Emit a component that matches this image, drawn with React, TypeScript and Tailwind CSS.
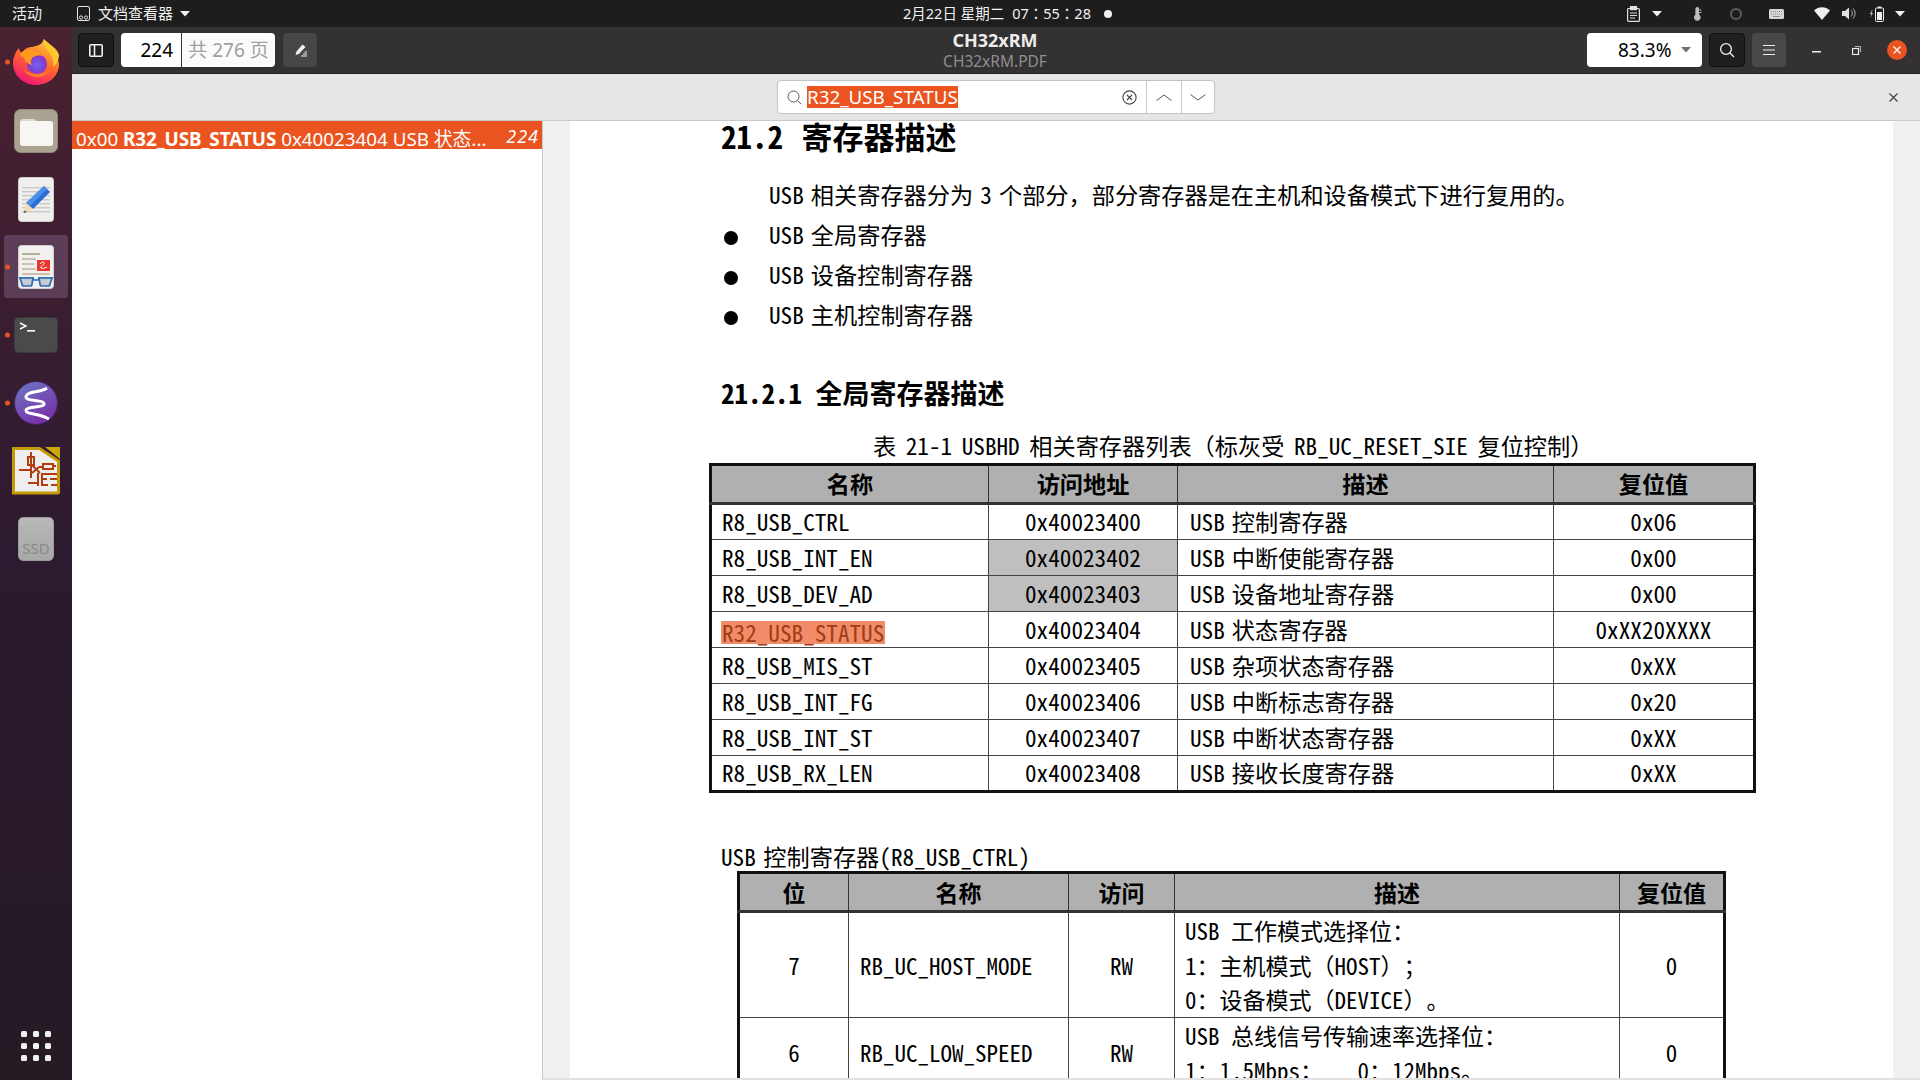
import React from "react";

const doc = "font-['Noto_Sans_Mono_CJK_SC','Noto_Sans_CJK_SC',monospace]";
const ui = "font-['Noto_Sans','Noto_Sans_CJK_SC',sans-serif]";

function Dot() {
  return <span className="absolute left-[5px] top-1/2 h-[5px] w-[5px] -translate-y-1/2 rounded-full bg-[#e95420]" />;
}

function Firefox() {
  return (
    <svg width="46" height="46" viewBox="0 0 46 46">
      <defs>
        <linearGradient id="ff1" x1="0.8" y1="0" x2="0.3" y2="1">
          <stop offset="0" stopColor="#ffd43a" />
          <stop offset="0.5" stopColor="#ff6a2a" />
          <stop offset="1" stopColor="#f0127a" />
        </linearGradient>
        <radialGradient id="ff2" cx="0.5" cy="0.55" r="0.55">
          <stop offset="0" stopColor="#6f63f0" />
          <stop offset="1" stopColor="#8a2fc0" />
        </radialGradient>
      </defs>
      <path d="M31 0c1 5 4 8 8 12 5 5 7 10 7 13 0 12-10 21-23 21C10 46 0 36 0 24 0 18 3 12 6 9c0 2 1 4 3 5 2-4 6-6 10-6 4-1 8-2 10-4z" fill="url(#ff1)" />
      <path d="M31 0c-1 5 1 9 5 13 4 5 5 10 4 15 4-3 6-8 6-12C45 10 36 5 31 0z" fill="#ffc92e" />
      <circle cx="24" cy="25" r="10" fill="url(#ff2)" />
      <path d="M7 15c3-4 9-6 13-3 4 1 8 2 10 5-4-1-7 0-10 1-2 3-3 5-1 8-5-1-8-5-8-8-2 0-3-1-4-3z" fill="#ff9a1f" />
      <path d="M10 30c3 6 10 9 17 8 5-1 9-4 11-9-3 5-9 6-14 6-5 0-10-2-14-5z" fill="#ff7a2a" />
    </svg>
  );
}

function Files() {
  return (
    <svg width="44" height="44" viewBox="0 0 44 44">
      <rect x="0.5" y="0.5" width="43" height="43" rx="6" fill="#aaa392" stroke="#8f897b" />
      <path d="M6 13a3 3 0 0 1 3-3h11l4 3v3H6z" fill="#dcd8ce" />
      <rect x="6" y="12" width="33" height="25" rx="2.5" fill="#f7f6f3" />
    </svg>
  );
}

function Editor() {
  return (
    <svg width="36" height="45" viewBox="0 0 36 45">
      <rect x="0.5" y="0.5" width="35" height="44" rx="3" fill="#f0efee" stroke="#cfcfcf" />
      {[10, 14, 18, 22, 26, 30, 34].map((y) => (
        <rect key={y} x="4" y={y} width="28" height="1.4" fill="#c9c9c9" />
      ))}
      <path d="M26 9l6 6-17 17-7-6z" fill="#2a6fd6" />
      <path d="M26 9l3 3-17 17-4-3z" fill="#4a90e8" />
      <path d="M8 26l7 6-9 4z" fill="#eed9b5" />
      <path d="M6.8 33.5l1.8 1.5-3 1z" fill="#333" />
    </svg>
  );
}

function Viewer() {
  return (
    <svg width="36" height="44" viewBox="0 0 36 44">
      <rect x="0.5" y="0.5" width="35" height="43" rx="3" fill="#f2f1ef" stroke="#cfcfcf" />
      <rect x="4" y="8" width="18" height="2" fill="#b7ae98" />
      <rect x="4" y="13" width="14" height="2" fill="#c9c2af" />
      <rect x="4" y="18" width="12" height="2" fill="#c9c2af" />
      <rect x="4" y="23" width="14" height="2" fill="#c9c2af" />
      <rect x="19" y="15" width="13" height="11" fill="#e8362f" />
      <path d="M22 19c2-3 5-2 4 0s-4 2-3 4c1 1 4 0 6-1" fill="none" stroke="#fff" strokeWidth="1" />
      <rect x="4" y="28" width="28" height="2" fill="#c9c2af" />
      <path d="M1 33h14l1 2h4l1-2h14" fill="none" stroke="#2f6cb5" strokeWidth="1.5" />
      <path d="M2 33h13l-1 6a2 2 0 0 1-2 2H6a2 2 0 0 1-2-2zM21 33h13l-2 6a2 2 0 0 1-2 2h-6a2 2 0 0 1-2-2z" fill="#b9c3cc" fillOpacity="0.8" stroke="#2f6cb5" strokeWidth="1.7" />
    </svg>
  );
}

function Terminal() {
  return (
    <svg width="44" height="36" viewBox="0 0 44 36">
      <rect x="0.5" y="0.5" width="43" height="35" rx="4" fill="#4a4a4a" stroke="#3a3a3a" />
      <path d="M6 6l6 3-6 3" fill="none" stroke="#fff" strokeWidth="1.4" />
      <rect x="13" y="13" width="8" height="1.6" fill="#fff" />
    </svg>
  );
}

function Emacs() {
  return (
    <svg width="44" height="44" viewBox="0 0 44 44">
      <defs>
        <linearGradient id="em" x1="0" y1="0" x2="0.6" y2="1">
          <stop offset="0" stopColor="#6a7cc4" />
          <stop offset="1" stopColor="#7a2fa8" />
        </linearGradient>
      </defs>
      <circle cx="22" cy="22" r="21.5" fill="url(#em)" stroke="#43245e" />
      <path d="M33 7C26 12 13 10 12 15.500C11 21 29 18 30 22.500C31 27 12 25 12 29.500C12 33.500 25 32 35 38" fill="none" stroke="#fff" strokeWidth="3" />
    </svg>
  );
}

function Kicad() {
  return (
    <svg width="48" height="48" viewBox="0 0 48 48">
      <path d="M1.5 1.5h26l19 12.500v31a1 1 0 0 1-1 1h-44z" fill="#eeeeee" stroke="#c59a08" strokeWidth="3" />
      <path d="M33 0h15v12z" fill="#cda60e" />
      <g stroke="#b23c10" strokeWidth="2" fill="none">
        <path d="M19 5v26M7 23h13M20 18l8 8M20 26l7-6" />
        <rect x="16" y="10" width="6" height="8" />
        <path d="M27 20h4M31 17h10v5H31zM41 19h3" />
        <path d="M16 36h10M26 26v13M31 27h14M31 32h4M38 32h7M31 38h5M39 38h6" />
        <path d="M30 26v13" />
      </g>
    </svg>
  );
}

function Ssd() {
  return (
    <div className="flex h-[44px] w-[36px] flex-col items-center justify-end rounded-[5px] border border-[#9a9a9a] bg-gradient-to-b from-[#b8b8b8] to-[#a8a8a8] pb-[3px]">
      <span className="font-['Noto_Sans',sans-serif] text-[15px] leading-[18px] text-[#8a8a8a]">SSD</span>
    </div>
  );
}

function Dock() {
  return (
    <aside className="flex w-[72px] shrink-0 flex-col items-center bg-gradient-to-b from-[#4a2130] via-[#2c1a30] to-[#251a24]">
      <div className="relative mt-[12px] flex h-[46px] w-[72px] items-center justify-center"><Dot /><Firefox /></div>
      <div className="mt-[24px] flex h-[44px] items-center justify-center"><Files /></div>
      <div className="mt-[24px] flex h-[45px] items-center justify-center"><Editor /></div>
      <div className="relative mt-[13px] flex h-[63px] w-[72px] items-center justify-center">
        <div className="flex h-[63px] w-[64px] items-center justify-center rounded-[3px] bg-[#5c3d58]"><Viewer /></div>
        <Dot />
      </div>
      <div className="relative mt-[19px] flex h-[36px] w-[72px] items-center justify-center"><Dot /><Terminal /></div>
      <div className="relative mt-[28px] flex h-[44px] w-[72px] items-center justify-center"><Dot /><Emacs /></div>
      <div className="mt-[22px] flex h-[48px] items-center justify-center"><Kicad /></div>
      <div className="mt-[22px] flex h-[44px] items-center justify-center"><Ssd /></div>
      <div className="mt-auto mb-[19px] grid grid-cols-3 gap-x-[6px] gap-y-[6px]">
        {Array.from({ length: 9 }).map((_, i) => (
          <span key={i} className="h-[6px] w-[6px] rounded-[1.5px] bg-[#f2f2f2]" />
        ))}
      </div>
    </aside>
  );
}

function Arrow({ className = "" }: { className?: string }) {
  return (
    <svg width="10" height="6" viewBox="0 0 10 6" className={className}>
      <path d="M0 0h10L5 5.5z" fill="currentColor" />
    </svg>
  );
}

function TopBar() {
  return (
    <header className={`flex h-[27px] shrink-0 items-center bg-[#1d1d1d] text-[15px] text-[#f0f0f0] ${ui}`}>
      <div className="flex flex-1 items-center">
        <span className="ml-[12px] w-[65px]">活动</span>
        <svg width="13" height="16" viewBox="0 0 13 16" fill="none" stroke="#e8e8e8" strokeWidth="1">
          <rect x="0.5" y="0.5" width="12" height="14" rx="1.5" />
          <circle cx="4" cy="11.5" r="1.6" /><circle cx="9" cy="11.5" r="1.6" />
        </svg>
        <span className="ml-[8px]">文档查看器</span>
        <Arrow className="ml-[7px]" />
      </div>
      <div className="absolute left-[903px] flex items-center">
        <span className="text-[14.500px]">2月22日 星期二</span>
        <span className="ml-[8px] font-['Noto_Sans','Noto_Sans_CJK_TC',sans-serif] text-[14.500px]">07：55：28</span>
        <span className="ml-[13px] h-[8px] w-[8px] rounded-full bg-[#f0f0f0]" />
      </div>
      <div className="flex items-center">
        <svg width="13" height="16" viewBox="0 0 13 16" fill="none" stroke="#e0e0e0" strokeWidth="1.2">
          <rect x="0.6" y="2.5" width="11.8" height="12.9" rx="1" />
          <rect x="3.5" y="0.6" width="6" height="3" fill="#e0e0e0" />
          <path d="M3 7h7M3 9.5h7M3 12h5" />
        </svg>
        <Arrow className="ml-[12px]" />
        <svg width="8" height="14" viewBox="0 0 8 14" className="ml-[32px]" fill="none" stroke="#bdbdbd" strokeWidth="1.3">
          <path d="M2 8V2a1.3 1.3 0 0 1 2.6 0v6a2.7 2.700 0 1 1-2.6 0z" fill="#bdbdbd" /><path d="M5.5 3h2M5.5 5.5h2" strokeWidth="1" />
        </svg>
        <span className="ml-[28px] h-[12px] w-[12px] rounded-full border-[2.500px] border-[#5a5a5a]" />
        <svg width="15" height="10" viewBox="0 0 15 10" className="ml-[27px]">
          <rect width="15" height="10" rx="1.5" fill="#d8d8d8" />
          <path d="M2 2.5h11M2 5h11" stroke="#8a8a8a" strokeWidth="1" strokeDasharray="1 1" /><rect x="4" y="7" width="7" height="1" fill="#8a8a8a" />
        </svg>
        <svg width="16" height="13" viewBox="0 0 16 13" className="ml-[30px]">
          <path d="M0 3.5C4-1 12-1 16 3.5L8 13z" fill="#f0f0f0" />
        </svg>
        <svg width="15" height="13" viewBox="0 0 15 13" className="ml-[12px]">
          <path d="M0 4h3l4-3.500v12L3 9H0z" fill="#e0e0e0" />
          <path d="M9 3.500a4 4 0 0 1 0 6M11 1.500a7 7 0 0 1 0 10" fill="none" stroke="#b8b8b8" strokeWidth="1" />
        </svg>
        <svg width="15" height="16" viewBox="0 0 15 16" className="ml-[12px]">
          <path d="M3 4L1 8h1.500L1 12l3-5H2.500L3.500 4z" fill="#cfcfcf" />
          <rect x="6.500" y="2" width="8" height="13.500" rx="1" fill="none" stroke="#eee" strokeWidth="1" />
          <rect x="8.800" y="0.500" width="3.400" height="1.500" fill="#eee" />
          <rect x="8" y="6" width="5" height="8" fill="#eee" />
        </svg>
        <Arrow className="ml-[11px] mr-[15px]" />
      </div>
    </header>
  );
}

function ToolBar() {
  return (
    <div className={`flex h-[47px] shrink-0 items-center border-b border-[#1f1f1f] bg-[#333132] pl-[6px] ${ui}`}>
      <button className="flex h-[34px] w-[36px] items-center justify-center rounded-[4px] border border-[#101010] bg-[#1f1f1f]">
        <svg width="14" height="13" viewBox="0 0 14 13" fill="none" stroke="#eee" strokeWidth="1.6">
          <rect x="0.8" y="0.8" width="12.400" height="11.400" rx="1" />
          <path d="M5.500 1v11" />
        </svg>
      </button>
      <div className="ml-[7px] flex h-[34px] w-[154px] overflow-hidden rounded-[4px] text-[19px]">
        <span className="flex w-[61px] items-center justify-end border-r border-[#333] bg-white pr-[8px] text-black">224</span>
        <span className="flex flex-1 items-center justify-center bg-[#fbfbfb] text-[#a0a0a0]">共 276 页</span>
      </div>
      <button className="ml-[8px] flex h-[34px] w-[34px] items-center justify-center rounded-[4px] bg-[#464646]">
        <svg width="15" height="15" viewBox="0 0 15 15">
          <path d="M9.500 1.500l3 2.500-6.500 7-3.500 1 1-3.500z" fill="#eee" />
          <path d="M8 13h6M10 11h4M11.500 9h2.500" stroke="#eee" strokeWidth="1" />
        </svg>
      </button>
      <div className="absolute left-[795px] flex w-[400px] flex-col items-center">
        <span className="text-[18px] font-bold leading-[23px] text-[#ededed]">CH32xRM</span>
        <span className="text-[15.500px] leading-[19px] text-[#8f8f8f]">CH32xRM.PDF</span>
      </div>
      <div className="ml-auto flex items-center pr-[13px]">
        <div className="relative flex h-[34px] w-[115px] items-center rounded-[4px] bg-white pl-[31px] text-[19px] text-black">
          83.3%
          <Arrow className="absolute right-[11px] top-[14px] text-[#707070]" />
        </div>
        <button className="ml-[7px] flex h-[34px] w-[36px] items-center justify-center rounded-[4px] border border-[#101010] bg-[#1f1f1f]">
          <svg width="16" height="16" viewBox="0 0 16 16" fill="none" stroke="#eee" strokeWidth="1.3"><circle cx="7" cy="7" r="5.4" /><path d="M11 11l4 4" /></svg>
        </button>
        <button className="ml-[7px] flex h-[34px] w-[34px] items-center justify-center rounded-[4px] bg-[#484848]">
          <svg width="12" height="10" viewBox="0 0 12 10" stroke="#eee" strokeWidth="1"><path d="M0 .5h12M0 5h12M0 9.500h12" /></svg>
        </button>
        <svg width="9" height="2" viewBox="0 0 9 2" className="ml-[26px] mt-[4px]"><rect width="9" height="1.500" fill="#eee" /></svg>
        <svg width="9" height="9" viewBox="0 0 9 9" className="ml-[31px]" fill="none" stroke="#eee"><rect x="0.500" y="2.500" width="6" height="6" strokeWidth="1.2" /><path d="M3 .5h5.500V6" strokeWidth="0.7" /></svg>
        <span className="ml-[26px] flex h-[20px] w-[20px] items-center justify-center rounded-full bg-[#e95420]">
          <svg width="8" height="8" viewBox="0 0 8 8" stroke="#fff" strokeWidth="1.3"><path d="M.5.5l7 7M7.500.5l-7 7" /></svg>
        </span>
      </div>
    </div>
  );
}

function SearchBar() {
  return (
    <div className={`relative flex h-[47px] shrink-0 items-center border-b border-[#c9c9c9] bg-[#e6e6e6] pl-[705px] ${ui}`}>
      <div className="flex h-[34px] w-[438px] overflow-hidden rounded-[4px] border border-[#c4c4c4] bg-white">
        <div className="flex w-[369px] items-center border-r border-[#c8c8c8] pl-[9px]">
          <svg width="15" height="15" viewBox="0 0 15 15" fill="none" stroke="#555" strokeWidth="1"><circle cx="6.500" cy="6.500" r="5.500" /><path d="M10.500 10.500l3.500 3.500" /></svg>
          <span className="ml-[5px] bg-[#e95420] text-[18.800px] leading-[22px] text-white">R32_USB_STATUS</span>
          <svg width="15" height="15" viewBox="0 0 15 15" fill="none" stroke="#444" className="ml-auto mr-[9px]"><circle cx="7.500" cy="7.500" r="6.600" strokeWidth="1.1" /><path d="M5 5l5 5M10 5l-5 5" strokeWidth="1.1" /></svg>
        </div>
        <div className="flex w-[35px] items-center justify-center border-r border-[#c8c8c8]">
          <svg width="16" height="7" viewBox="0 0 16 7" fill="none" stroke="#555"><path d="M.5 6.500L8 1l7.500 5.500" /></svg>
        </div>
        <div className="flex flex-1 items-center justify-center">
          <svg width="16" height="7" viewBox="0 0 16 7" fill="none" stroke="#555"><path d="M.5.5L8 6 15.500.5" /></svg>
        </div>
      </div>
      <svg width="9" height="9" viewBox="0 0 9 9" stroke="#444" strokeWidth="1.2" className="absolute right-[22px] top-[19px]"><path d="M.5.5l8 8M8.500.5l-8 8" /></svg>
    </div>
  );
}

function Results() {
  return (
    <aside className={`w-[471px] shrink-0 border-r border-[#c8c8c8] bg-white ${ui}`}>
      <div className="flex h-[28px] items-start justify-between bg-[#e95420] pl-[4px] pr-[3px] text-white">
        <span className="mt-[5px] whitespace-nowrap text-[18.800px] leading-[26px]">0x00 <b>R32_USB_STATUS</b> 0x40023404 USB 状态...</span>
        <i className="mt-[2px] text-[18px] leading-[26px] tracking-[1px]">224</i>
      </div>
    </aside>
  );
}

const list1 = [
  ["R8_USB_CTRL", "0x40023400", "USB 控制寄存器", "0x06"],
  ["R8_USB_INT_EN", "0x40023402", "USB 中断使能寄存器", "0x00"],
  ["R8_USB_DEV_AD", "0x40023403", "USB 设备地址寄存器", "0x00"],
  ["R32_USB_STATUS", "0x40023404", "USB 状态寄存器", "0xXX20XXXX"],
  ["R8_USB_MIS_ST", "0x40023405", "USB 杂项状态寄存器", "0xXX"],
  ["R8_USB_INT_FG", "0x40023406", "USB 中断标志寄存器", "0x20"],
  ["R8_USB_INT_ST", "0x40023407", "USB 中断状态寄存器", "0xXX"],
  ["R8_USB_RX_LEN", "0x40023408", "USB 接收长度寄存器", "0xXX"],
];

const th = "border border-b-[3px] border-[#333] bg-[#b0b0b0] text-center font-bold";
const td = "border border-[#444] text-center";

function Table1() {
  return (
    <table className="ml-[-12px] w-[1047px] table-fixed border-collapse border-[3px] border-[#111] text-[23.200px] leading-[30px] [word-spacing:-4.500px]">
      <colgroup><col className="w-[278px]" /><col className="w-[189px]" /><col className="w-[376px]" /><col /></colgroup>
      <thead>
        <tr className="h-[39px]"><th className={`${th} pb-[2px]`}>名称</th><th className={`${th} pb-[2px]`}>访问地址</th><th className={`${th} pb-[2px]`}>描述</th><th className={`${th} pb-[2px]`}>复位值</th></tr>
      </thead>
      <tbody>
        {list1.map((r, i) => (
          <tr key={r[0]} className="h-[36px]">
            <td className={`${td} pb-[2px] pl-[10px] text-left`}>
              {r[0] === "R32_USB_STATUS" ? <span className="ml-[-1px] inline-block h-[23px] bg-[#f28c68] px-[1px] leading-[23px] text-[#a03c18] align-middle">{r[0]}</span> : r[0]}
            </td>
            <td className={`${td} pb-[2px] ${i === 1 || i === 2 ? "bg-[#bfbfbf]" : ""}`}>{r[1]}</td>
            <td className={`${td} pb-[2px] pl-[12px] text-left`}>{r[2]}</td>
            <td className={`${td} pb-[2px]`}>{r[3]}</td>
          </tr>
        ))}
      </tbody>
    </table>
  );
}

function Table2() {
  return (
    <table className="ml-[16px] w-[989px] table-fixed border-collapse border-[3px] border-[#111] text-[23px]">
      <colgroup><col className="w-[110px]" /><col className="w-[220px]" /><col className="w-[106px]" /><col className="w-[445px]" /><col /></colgroup>
      <thead>
        <tr className="h-[39px]"><th className={th}>位</th><th className={th}>名称</th><th className={th}>访问</th><th className={th}>描述</th><th className={th}>复位值</th></tr>
      </thead>
      <tbody>
        <tr className="h-[106px]">
          <td className={td}>7</td>
          <td className={`${td} pl-[11px] text-left`}>RB_UC_HOST_MODE</td>
          <td className={td}>RW</td>
          <td className={`${td} pl-[10px] text-left leading-[34.500px]`}>USB 工作模式选择位：<br />1：主机模式（HOST）；<br />0：设备模式（DEVICE）。</td>
          <td className={td}>0</td>
        </tr>
        <tr className="h-[70px]">
          <td className={td}>6</td>
          <td className={`${td} pl-[11px] text-left`}>RB_UC_LOW_SPEED</td>
          <td className={td}>RW</td>
          <td className={`${td} pl-[10px] text-left leading-[34.500px] whitespace-pre`}>USB 总线信号传输速率选择位：<br />1：1.5Mbps；   0：12Mbps。</td>
          <td className={td}>0</td>
        </tr>
      </tbody>
    </table>
  );
}

function Bullet({ children }: { children: React.ReactNode }) {
  return (
    <div className="flex h-[40px] items-center">
      <span className="mb-[1px] ml-[3px] h-[14px] w-[14px] rounded-full bg-black" />
      <span className="ml-[31px] pb-[7px] [word-spacing:-4.500px]">{children}</span>
    </div>
  );
}

function Page() {
  return (
    <main className="flex h-[959px] min-w-0 flex-1 overflow-hidden border-b-2 border-[#e2e2e2] bg-[#f1f1f1] pl-[27px] pr-[27px]">
      <div className={`flex-1 overflow-hidden bg-white pl-[151px] text-[23.200px] text-black ${doc}`}>
        <h1 className="h-[36px] text-[31px] font-bold leading-[29px] [word-spacing:3px]">21.2 寄存器描述</h1>
        <p className="ml-[48px] mt-[21px] h-[40px] leading-[33px] [word-spacing:-4.500px]">USB 相关寄存器分为 3 个部分，部分寄存器是在主机和设备模式下进行复用的。</p>
        <Bullet>USB 全局寄存器</Bullet>
        <Bullet>USB 设备控制寄存器</Bullet>
        <Bullet>USB 主机控制寄存器</Bullet>
        <h2 className="mt-[37px] h-[36px] text-[27px] font-bold leading-[36px]">21.2.1 全局寄存器描述</h2>
        <p className="ml-[152px] mt-[18px] h-[34px] leading-[33px] [word-spacing:-2px]">表 21-1 USBHD 相关寄存器列表（标灰受 RB_UC_RESET_SIE 复位控制）</p>
        <Table1 />
        <p className="mt-[48px] h-[30px] leading-[30px] [word-spacing:-4px]">USB 控制寄存器(R8_USB_CTRL)</p>
        <Table2 />
      </div>
    </main>
  );
}

export default function App() {
  return (
    <div className="relative flex h-[1080px] w-[1920px] flex-col overflow-hidden bg-white [text-spacing-trim:space-all]">
      <TopBar />
      <div className="flex min-h-0 flex-1">
        <Dock />
        <div className="flex min-w-0 flex-1 flex-col">
          <ToolBar />
          <SearchBar />
          <div className="flex min-h-0 flex-1">
            <Results />
            <Page />
          </div>
        </div>
      </div>
    </div>
  );
}
